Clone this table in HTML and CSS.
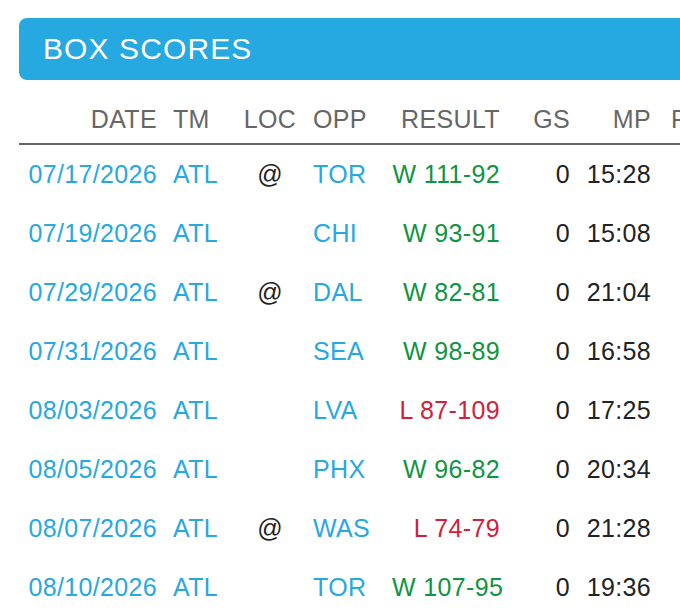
FILE: index.html
```html
<!DOCTYPE html>
<html lang="en">
<head>
<meta charset="utf-8">
<title>Box Scores</title>
<link rel="stylesheet" href="styles.css">
</head>
<body>
<section class="panel">
  <h2 class="panel-title">BOX SCORES</h2>
  <table class="scores">
    <colgroup>
      <col class="c-date"><col class="c-tm"><col class="c-loc"><col class="c-opp"><col class="c-res"><col class="c-gs"><col class="c-mp"><col class="c-pts">
    </colgroup>
    <thead>
      <tr>
        <th class="r">DATE</th><th class="l">TM</th><th class="c">LOC</th><th class="l">OPP</th><th class="r">RESULT</th><th class="r">GS</th><th class="r">MP</th><th class="l">PTS</th>
      </tr>
    </thead>
    <tbody>
      <tr><td class="r link">07/17/2026</td><td class="l link">ATL</td><td class="c">@</td><td class="l link">TOR</td><td class="r win">W 111-92</td><td class="r">0</td><td class="r">15:28</td><td class="r">4</td></tr>
      <tr><td class="r link">07/19/2026</td><td class="l link">ATL</td><td class="c"></td><td class="l link">CHI</td><td class="r win">W 93-91</td><td class="r">0</td><td class="r">15:08</td><td class="r">6</td></tr>
      <tr><td class="r link">07/29/2026</td><td class="l link">ATL</td><td class="c">@</td><td class="l link">DAL</td><td class="r win">W 82-81</td><td class="r">0</td><td class="r">21:04</td><td class="r">8</td></tr>
      <tr><td class="r link">07/31/2026</td><td class="l link">ATL</td><td class="c"></td><td class="l link">SEA</td><td class="r win">W 98-89</td><td class="r">0</td><td class="r">16:58</td><td class="r">5</td></tr>
      <tr><td class="r link">08/03/2026</td><td class="l link">ATL</td><td class="c"></td><td class="l link">LVA</td><td class="r loss">L 87-109</td><td class="r">0</td><td class="r">17:25</td><td class="r">3</td></tr>
      <tr><td class="r link">08/05/2026</td><td class="l link">ATL</td><td class="c"></td><td class="l link">PHX</td><td class="r win">W 96-82</td><td class="r">0</td><td class="r">20:34</td><td class="r">9</td></tr>
      <tr><td class="r link">08/07/2026</td><td class="l link">ATL</td><td class="c">@</td><td class="l link">WAS</td><td class="r loss">L 74-79</td><td class="r">0</td><td class="r">21:28</td><td class="r">7</td></tr>
      <tr><td class="r link">08/10/2026</td><td class="l link">ATL</td><td class="c"></td><td class="l link">TOR</td><td class="r win">W 107-95</td><td class="r">0</td><td class="r">19:36</td><td class="r">10</td></tr>
    </tbody>
  </table>
</section>
</body>
</html>
```

FILE: styles.css
```css
html, body {
  margin: 0;
  padding: 0;
  overflow: hidden;
  background: #ffffff;
}

body {
  font-family: "Liberation Sans", Arial, sans-serif;
  color: #222222;
}

.panel {
  width: 760px;
  padding: 18px 0 0 19px;
}

.panel-title {
  margin: 0;
  height: 62px;
  line-height: 61px;
  padding: 0 24px;
  background: #26a8e0;
  color: #ffffff;
  font-size: 30px;
  letter-spacing: 1.1px;
  font-weight: normal;
  border-radius: 8px 0 0 8px;
}

.scores {
  margin-top: 24px;
  border-collapse: collapse;
  table-layout: fixed;
  width: 741px;
  font-size: 25px;
  letter-spacing: 0.35px;
}

.c-date { width: 146px; }
.c-tm { width: 70px; }
.c-loc { width: 70px; }
.c-opp { width: 79px; }
.c-res { width: 124px; }
.c-gs { width: 70px; }
.c-mp { width: 81px; }
.c-pts { width: 101px; }

.scores th,
.scores td {
  padding: 0 8px;
  white-space: nowrap;
}

.scores th {
  font-weight: normal;
  color: #666666;
  line-height: 30px;
  padding-bottom: 9px;
  border-bottom: 2px solid #666666;
}

.scores td {
  line-height: 59px;
  color: #222222;
}

.scores th.l:last-child { padding-left: 12px; }

.scores .r { text-align: right; }
.scores .l { text-align: left; }
.scores .c { text-align: center; }

.scores td.link { color: #27a8e0; }
.scores td.win { color: #0f9441; }
.scores td.loss { color: #d3203a; }
```
